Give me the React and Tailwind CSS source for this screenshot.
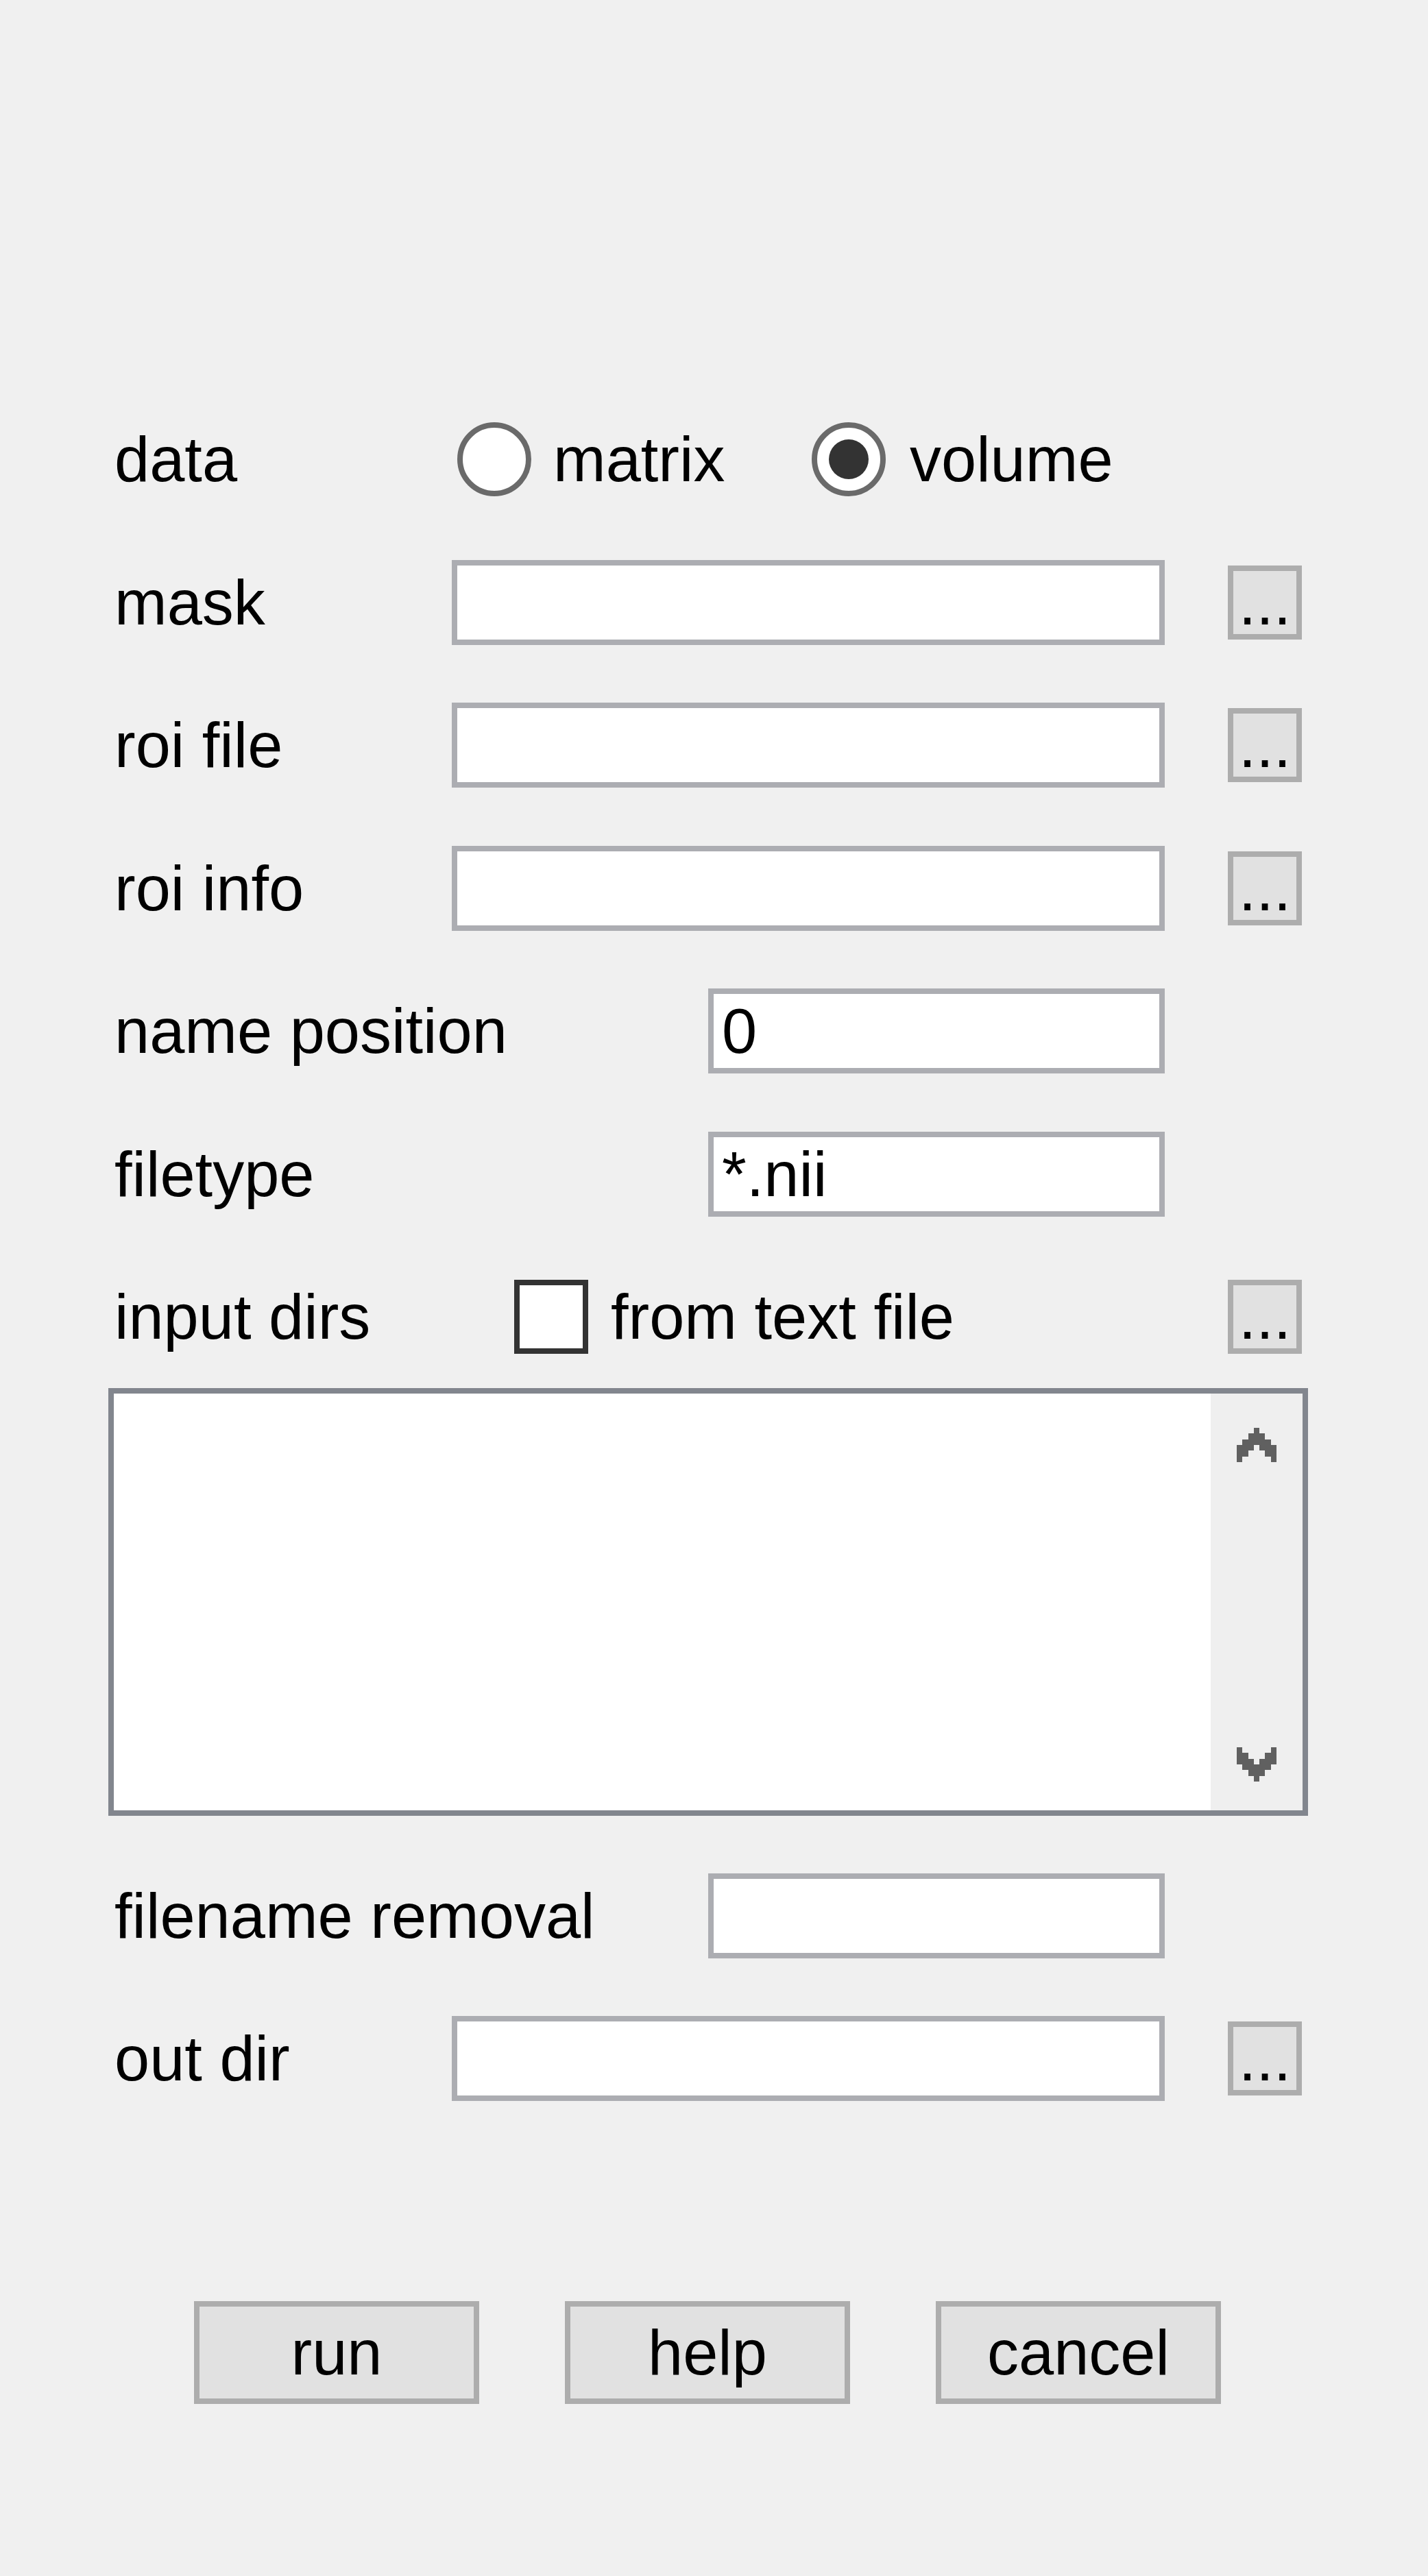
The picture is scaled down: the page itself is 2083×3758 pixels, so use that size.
import React from 'react'

function Label({ children, className = '' }) {
  return <div className={`shrink-0 pl-[9px] leading-none ${className}`}>{children}</div>
}

function TextBox({ value = '', className = '' }) {
  return (
    <div className={`flex h-[124px] items-center border-[8px] border-[#acadb2] bg-white pl-[12px] leading-none ${className}`}>
      {value}
    </div>
  )
}

function BrowseButton() {
  return (
    <button
      type="button"
      className="flex h-[108px] w-[108px] shrink-0 items-center justify-center border-[8px] border-[#adadad] bg-[#e1e1e1] leading-none"
    >
      ...
    </button>
  )
}

function Radio({ checked }) {
  return (
    <div className="flex h-[108px] w-[108px] shrink-0 items-center justify-center rounded-full border-[8px] border-[#6a6a6a] bg-white">
      {checked && <div className="h-[58px] w-[58px] rounded-full bg-[#333333]" />}
    </div>
  )
}

function Arrow({ down }) {
  // pixel chevron, 7 x 6 grid
  const cells = [
    [3],
    [2, 3, 4],
    [1, 2, 3, 4, 5],
    [0, 1, 2, 4, 5, 6],
    [0, 1, 5, 6],
    [0, 6],
  ]
  return (
    <svg width="58" height="50" viewBox="0 0 7 6" shapeRendering="crispEdges" className={down ? 'rotate-180' : ''}>
      {cells.map((row, y) => row.map((x) => <rect key={`${x}-${y}`} x={x} y={y} width="1" height="1" fill="#606060" />))}
    </svg>
  )
}

function Row({ children, className = '' }) {
  return <div className={`flex h-[124px] items-center ${className}`}>{children}</div>
}

export default function App() {
  return (
    <div className="min-h-screen bg-[#f0f0f0] pt-[608px] pl-[158px] font-['Liberation_Sans',Arial,sans-serif] text-[92px] text-black">
      <div className="flex flex-col gap-[84.5px]">
        <Row>
          <Label className="w-[509px]">data</Label>
          <div className="flex w-[517px] items-center gap-[32px]">
            <Radio />
            <span className="leading-none">matrix</span>
          </div>
          <div className="flex items-center gap-[35px]">
            <Radio checked />
            <span className="leading-none">volume</span>
          </div>
        </Row>

        <Row>
          <Label className="w-[501px]">mask</Label>
          <TextBox className="w-[1040px]" />
          <div className="ml-[92px]">
            <BrowseButton />
          </div>
        </Row>

        <Row>
          <Label className="w-[501px]">roi file</Label>
          <TextBox className="w-[1040px]" />
          <div className="ml-[92px]">
            <BrowseButton />
          </div>
        </Row>

        <Row>
          <Label className="w-[501px]">roi info</Label>
          <TextBox className="w-[1040px]" />
          <div className="ml-[92px]">
            <BrowseButton />
          </div>
        </Row>

        <Row>
          <Label className="w-[875px]">name position</Label>
          <TextBox className="w-[666px]" value="0" />
        </Row>

        <Row>
          <Label className="w-[875px]">filetype</Label>
          <TextBox className="w-[666px]" value="*.nii" />
        </Row>

        <Row className="w-[1741px]">
          <Label className="w-[592px]">input dirs</Label>
          <div className="h-[108px] w-[108px] shrink-0 border-[8px] border-[#333333] bg-white" />
          <span className="ml-[33px] leading-none">from text file</span>
          <div className="ml-auto">
            <BrowseButton />
          </div>
        </Row>
      </div>

      <div className="mt-[41.5px] flex h-[624px] w-[1750px] border-[8px] border-[#82868e] bg-white">
        <div className="flex-1" />
        <div className="flex w-[134px] flex-col items-center justify-between bg-[#efefef] pt-[50px] pb-[42px]">
          <Arrow />
          <Arrow down />
        </div>
      </div>

      <div className="mt-[84px] flex flex-col gap-[84.5px]">
        <Row>
          <Label className="w-[875px]">filename removal</Label>
          <TextBox className="w-[666px]" />
        </Row>

        <Row>
          <Label className="w-[501px]">out dir</Label>
          <TextBox className="w-[1040px]" />
          <div className="ml-[92px]">
            <BrowseButton />
          </div>
        </Row>
      </div>

      <div className="mt-[292px] ml-[125px] flex gap-[125px]">
        {['run', 'help', 'cancel'].map((t) => (
          <button
            key={t}
            type="button"
            className="flex h-[150px] w-[416px] items-center justify-center border-[8px] border-[#adadad] bg-[#e1e1e1] leading-none"
          >
            {t}
          </button>
        ))}
      </div>
    </div>
  )
}
